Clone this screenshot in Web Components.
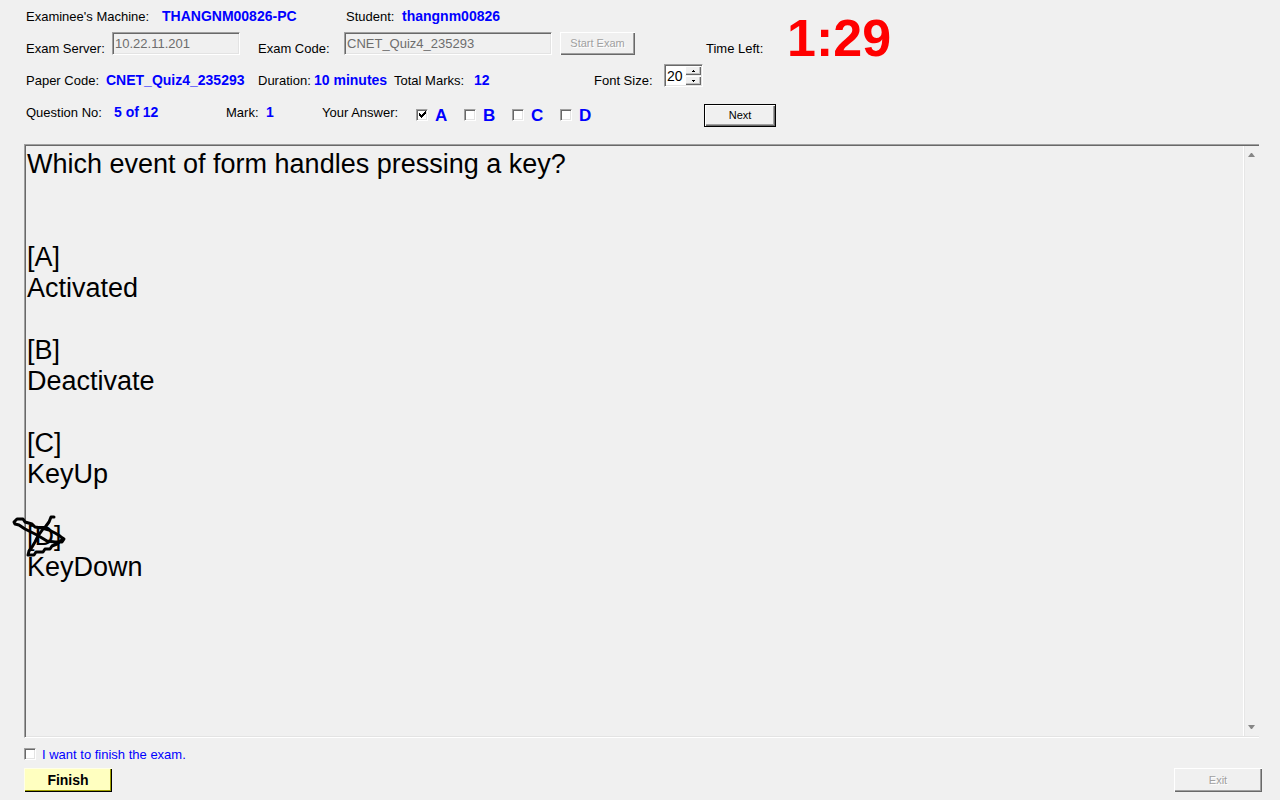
<!DOCTYPE html>
<html lang="en">
<head>
<meta charset="utf-8">
<title>Exam Client</title>
<style>
html { --face: #f0f0f0; background: #f0f0f0; }
body { margin: 0; font: 13px/16px "Liberation Sans", Arial, sans-serif; color: #000; }
</style>
</head>
<body>
<exam-app></exam-app>

<template id="t-app">
<style>
:host { display: flex; flex-direction: column; min-height: 100vh; box-sizing: border-box; padding: 0 18px 8px 24px; background: var(--face); }
header { display: grid; grid-auto-rows: 32px; padding-left: 2px; }
.row { display: grid; grid-template-rows: 32px; }
.row win-button { height: 23px; }
.machine { grid-template-columns: 320px 1fr; }
.server { grid-template-columns: 232px 302px 146px 1fr; }
.paper { grid-template-columns: 232px 136px 200px 1fr; }
.question { grid-template-columns: 200px 96px 382px 72px; }
.question win-button { margin-top: 8px; }
question-pane { flex: 1; margin: 16px 3px 8px 0; }
footer { display: flex; justify-content: space-between; margin-top: 6px; }
</style>
<header>
  <div class="row machine">
    <exam-label text="Examinee's Machine:" style="--label: 136px">THANGNM00826-PC</exam-label>
    <exam-label text="Student:" style="--label: 56px">thangnm00826</exam-label>
  </div>
  <div class="row server">
    <exam-input text="Exam Server:" value="10.22.11.201" style="--box: 128px"></exam-input>
    <exam-input text="Exam Code:" value="CNET_Quiz4_235293" style="--box: 208px"></exam-input>
    <win-button disabled style="--w: 75px">Start Exam</win-button>
    <exam-timer></exam-timer>
  </div>
  <div class="row paper">
    <exam-label text="Paper Code:" style="--label: 80px">CNET_Quiz4_235293</exam-label>
    <exam-label text="Duration:" style="--label: 56px">10 minutes</exam-label>
    <exam-label text="Total Marks:" style="--label: 80px">12</exam-label>
    <font-size-box></font-size-box>
  </div>
  <div class="row question">
    <exam-label text="Question No:" style="--label: 88px">5 of 12</exam-label>
    <exam-label text="Mark:" style="--label: 40px">1</exam-label>
    <answer-picker></answer-picker>
    <win-button variant="default" style="--w: 72px">Next</win-button>
  </div>
</header>
<question-pane>Which event of form handles pressing a key?


[A]
Activated

[B]
Deactivate

[C]
KeyUp

<ink-mark>[D]</ink-mark>
KeyDown</question-pane>
<win-check text="I want to finish the exam."></win-check>
<footer>
  <win-button variant="finish" style="--w: 88px">Finish</win-button>
  <win-button disabled style="--w: 88px">Exit</win-button>
</footer>
</template>

<template id="t-label">
<style>
:host { display: grid; grid-template-columns: var(--label) 1fr; align-items: center; white-space: nowrap; }
span { padding-top: 2px; }
b { color: #00f; font-size: 14px; }
</style>
<span></span><b><slot></slot></b>
</template>

<template id="t-input">
<style>
:host { display: grid; grid-template-columns: 86px var(--box); white-space: nowrap; }
label { align-self: center; padding-top: 2px; }
input { box-sizing: border-box; width: 100%; height: 23px; margin: 0; padding: 0 2px; border: 1px solid; border-color: #a0a0a0 #fff #fff #a0a0a0; box-shadow: inset 1px 1px #696969, inset -1px -1px #e3e3e3; background: var(--face); color: #6d6d6d; font: 13px/16px "Liberation Sans", Arial, sans-serif; }
</style>
<label for="i"></label><input id="i" type="text" disabled>
</template>

<template id="t-button">
<style>
:host { display: block; width: var(--w); height: 24px; }
button { width: 100%; height: 100%; margin: 0; padding: 0 0 1px; border: 0; background: var(--face); color: #000; font: 11px/16px "Liberation Sans", Arial, sans-serif; box-shadow: inset 1px 1px #fff, inset -1px -1px #696969, inset -2px -2px #a0a0a0; }
button:disabled { color: #a0a0a0; text-shadow: 1px 1px #fff; }
:host([variant="default"]) button { border: 1px solid #000; }
:host([variant="finish"]) button { background: #ffffc0; font-size: 14px; font-weight: bold; box-shadow: inset 1px 1px #ffffe8, inset -1px -1px #000, inset -2px -2px #a0a000; }
</style>
<button type="button"><slot></slot></button>
</template>

<template id="t-timer">
<style>
:host { display: grid; grid-template-columns: 81px auto; grid-template-rows: 32px; justify-content: start; align-items: center; white-space: nowrap; }
label { padding-top: 2px; }
output { align-self: end; color: #f00; font: bold 52px/52px "Liberation Sans", Arial, sans-serif; }
</style>
<label for="t">Time Left:</label><output id="t">1:29</output>
</template>

<template id="t-size">
<style>
:host { display: grid; grid-template-columns: 70px 39px; white-space: nowrap; }
label { align-self: center; padding-top: 2px; }
.box { box-sizing: border-box; height: 23px; display: grid; grid-template-columns: 1fr 16px; padding: 1px; border: 1px solid; border-color: #a0a0a0 #fff #fff #a0a0a0; box-shadow: inset 1px 1px #696969, inset -1px -1px #e3e3e3; background: #fff; }
input { width: 100%; min-width: 0; height: 19px; box-sizing: border-box; margin: 0; padding: 1px 0 0 1px; border: 0; background: none; font: 14px/18px "Liberation Sans", Arial, sans-serif; appearance: textfield; }
input::-webkit-inner-spin-button { appearance: none; margin: 0; }
.spin { display: grid; grid-template-rows: 9px 9px; gap: 1px; background: var(--face); }
button { display: grid; place-items: center; margin: 0; padding: 0; border: 0; background: var(--face); box-shadow: inset 1px 1px #fff, inset -1px -1px #696969, inset -2px -2px #c0c0c0; }
svg { display: block; }
</style>
<label for="n">Font Size:</label>
<div class="box"><input id="n" type="number" value="20" min="8" max="72">
<div class="spin"><button type="button" aria-label="Larger"><svg width="3" height="2" shape-rendering="crispEdges"><path d="M1 0h1v1H1zM0 1h3v1H0z"/></svg></button><button type="button" aria-label="Smaller"><svg width="3" height="2" shape-rendering="crispEdges"><path d="M0 0h3v1H0zM1 1h1v1H1z"/></svg></button></div></div>
</template>

<template id="t-check">
<style>
:host { display: block; height: 16px; color: #00f; }
label { display: flex; align-items: center; gap: var(--gap, 6px); height: 100%; white-space: nowrap; }
span { padding-top: 2px; }
input { appearance: none; flex: none; box-sizing: border-box; width: 12px; height: 12px; margin: 0; border: 1px solid; border-color: #a0a0a0 #fff #fff #a0a0a0; box-shadow: inset 1px 1px #696969, inset -1px -1px #e3e3e3; background: #fff; }
input:checked { background: #fff url("data:image/svg+xml,%3Csvg xmlns='http://www.w3.org/2000/svg' width='10' height='10' shape-rendering='crispEdges'%3E%3Cpath d='M2 4h1v3h-1zM3 5h1v3h-1zM4 6h1v3h-1zM5 5h1v3h-1zM6 4h1v3h-1zM7 3h1v3h-1zM8 2h1v3h-1z'/%3E%3C/svg%3E") 0 -1px no-repeat; }
:host([big]) label { font-size: 17px; font-weight: bold; }
</style>
<label><input type="checkbox"><span></span></label>
</template>

<template id="t-answers">
<style>
:host { display: grid; grid-template-columns: 94px 1fr; align-items: center; white-space: nowrap; }
span { padding-top: 2px; }
.set { display: grid; grid-template-columns: repeat(4, 48px); padding-top: 6px; --gap: 7px; }
</style>
<span>Your Answer:</span>
<div class="set"><win-check big checked text="A"></win-check><win-check big text="B"></win-check><win-check big text="C"></win-check><win-check big text="D"></win-check></div>
</template>

<template id="t-pane">
<style>
:host { display: grid; grid-template-columns: 1fr 16px; padding: 1px 0 1px 1px; border: solid; border-width: 1px 0 1px 1px; border-color: #a0a0a0 #fff #fff #a0a0a0; box-shadow: inset 1px 1px #696969, inset 0 -1px #e3e3e3; }
.text { padding: 3px 1px; font-size: 27px; line-height: 31px; white-space: pre-wrap; }
.bar { display: flex; flex-direction: column; justify-content: space-between; align-items: center; padding: 7px 0; border-left: 1px solid #fff; box-shadow: inset 1px 0 #e6e6e6; }
svg { display: block; fill: #868686; }
</style>
<div class="text"><slot></slot></div>
<div class="bar"><svg width="7" height="4"><path d="M3 0h1l3 4H0z"/></svg><svg width="7" height="4"><path d="M0 0h7L4 4H3z"/></svg></div>
</template>

<template id="t-ink">
<style>
:host { display: inline-block; position: relative; white-space: nowrap; }
svg { position: absolute; left: -15px; top: -6px; width: 54px; height: 44px; overflow: visible; fill: none; stroke: #000; stroke-width: 3; stroke-linejoin: round; stroke-linecap: round; }
</style>
<slot></slot><svg viewBox="12 514 54 44" aria-hidden="true"><path d="M54 516L51 516L49 521L46 525L43 528L38 535L35 541L32 546L29 550L28 554L34 554L36 551L43 551L45 548L50 548L52 545L57 543L63 538L60 535L55 532L49 529L42 527L35 526L32 523L25 521L23 518L17 518L14 521L15 523L19 524L25 528L31 531L37 534L42 537L47 540L55 541L62 541L64 538L61 536"/></svg>
</template>

<script>
class Piece extends HTMLElement {
  constructor() {
    super();
    this.attachShadow({ mode: "open" }).append(
      document.getElementById(this.constructor.template).content.cloneNode(true));
  }
  part$(sel) { return this.shadowRoot.querySelector(sel); }
}
const define = (name, template, connected) => customElements.define(name, class extends Piece {
  static template = template;
  connectedCallback() { if (connected) connected.call(this); }
});

define("exam-label", "t-label", function () {
  this.part$("span").textContent = this.getAttribute("text");
});
define("exam-input", "t-input", function () {
  this.part$("label").textContent = this.getAttribute("text");
  this.part$("input").value = this.getAttribute("value");
});
define("win-button", "t-button", function () {
  this.part$("button").disabled = this.hasAttribute("disabled");
});
define("win-check", "t-check", function () {
  this.part$("span").textContent = this.getAttribute("text");
  this.part$("input").checked = this.hasAttribute("checked");
});
define("exam-timer", "t-timer");
define("font-size-box", "t-size", function () {
  const input = this.part$("input");
  const [up, down] = this.shadowRoot.querySelectorAll("button");
  up.onclick = () => input.stepUp();
  down.onclick = () => input.stepDown();
});
define("answer-picker", "t-answers");
define("ink-mark", "t-ink");
define("question-pane", "t-pane");
define("exam-app", "t-app");
</script>
</body>
</html>
